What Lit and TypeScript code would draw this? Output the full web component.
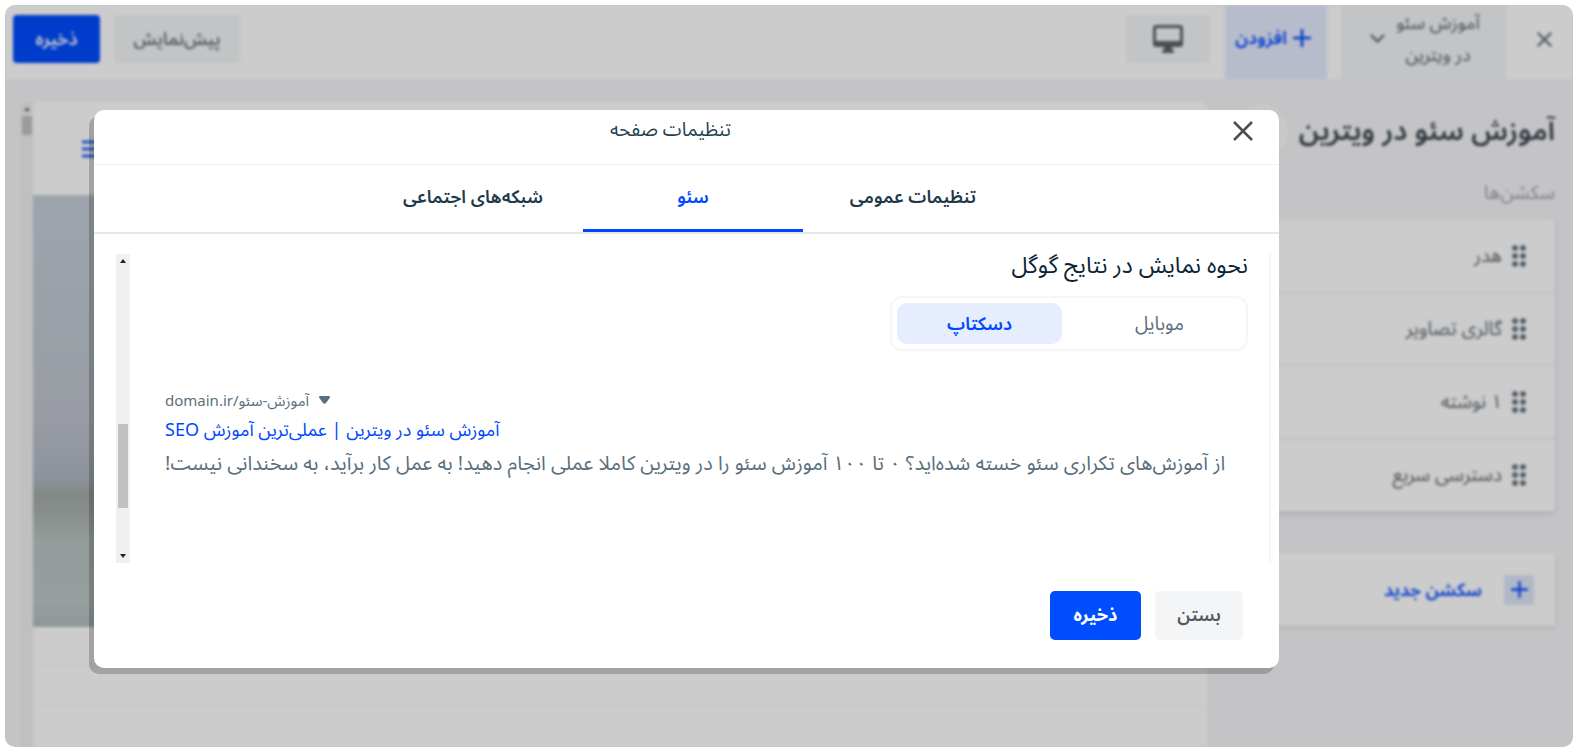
import { LitElement, html, css, svg } from "lit";
import { customElement, state } from "lit/decorators.js";
import { classMap } from "lit/directives/class-map.js";

const plus = (size: number, width: number) => html`
  <svg width=${size} height=${size} viewBox="0 0 18 18" aria-hidden="true">
    <path d="M9 1v16M1 9h16" fill="none" stroke="currentColor" stroke-width=${width} stroke-linecap="round" />
  </svg>`;

const cross = (size: number, width: number) => html`
  <svg width=${size} height=${size} viewBox="0 0 20 20" aria-hidden="true">
    <path d="M1 1l18 18M19 1L1 19" fill="none" stroke="currentColor" stroke-width=${width} />
  </svg>`;

const base = css`
  * { box-sizing: border-box; }
  button { font: inherit; color: inherit; border: 0; background: none; padding: 0; cursor: pointer; }
  a { text-decoration: none; color: inherit; }
  h1, h2, p, ul { margin: 0; padding: 0; font-weight: inherit; }
  svg { display: block; flex: none; }
`;

@customElement("page-editor")
class PageEditor extends LitElement {
  static styles = [base, css`
    :host { display: flex; flex-direction: column; height: 100%; background: #f5f6f8; filter: blur(1.4px); }
    .bar { display: flex; height: 74px; background: #fff; align-items: center; padding: 0 16px 0 8px; flex: none; font-size: 18px; color: #5a6269; }
    .exit, .device, .preview, .save { margin-bottom: 6px; }
    .exit { width: 26px; height: 40px; display: grid; place-items: center; }
    .page-pick, .add { height: 74px; padding-bottom: 8px; display: flex; align-items: center; justify-content: center; }
    .page-pick { margin-right: 25px; width: 165px; background: #f4f5f7; gap: 8px; line-height: 32px; padding-left: 6px; }
    .page-pick span { width: 90px; }
    .add { margin-right: 14px; width: 102px; background: #e5ecff; color: #0048ff; font-weight: 600; gap: 6px; padding-right: 6px; }
    .device { margin-right: 15px; width: 84px; height: 48px; background: #f4f5f7; border-radius: 4px; display: grid; place-items: center; }
    .space { flex: 1; }
    .preview { width: 126px; height: 48px; background: #f4f5f7; border-radius: 4px; font-weight: 500; }
    .save { margin-right: 14px; width: 87px; height: 48px; background: #004cff; color: #fff; border-radius: 4px; font-weight: 600; }
    .work { flex: 1; display: flex; min-height: 0; }
    .side { width: 366px; padding: 24px 18px 0; display: flex; flex-direction: column; }
    .head { display: flex; align-items: center; gap: 10px; height: 56px; }
    .head h1 { font-size: 28px; font-weight: 600; color: #3b474f; white-space: nowrap; }
    .round { width: 56px; height: 56px; border-radius: 50%; background: #fbfbfc; box-shadow: 0 0 3px #d8dadd; flex: none; }
    .label { font-size: 19px; line-height: 32px; margin-top: 17px; color: #9b9fa4; }
    .sections { list-style: none; margin-top: 12px; background: #fff; box-shadow: 0 2px 5px #d5d7da; }
    .sections li { height: 73px; display: flex; align-items: center; gap: 10px; padding-right: 29px; border-bottom: 1px solid #e4e6e8; color: #5b666f; font-size: 19px; }
    .grip { color: #566874; }
    .new { margin-top: 41px; height: 73px; background: #fff; box-shadow: 0 2px 5px #dcdde0; display: flex; align-items: center; gap: 22px; padding-right: 21px; color: #0048ff; font-weight: 600; font-size: 18px; }
    .new span { width: 30px; height: 30px; border-radius: 3px; background: #dde6fb; display: grid; place-items: center; }
    .canvas { flex: 1; display: flex; padding: 23px 0 0 15px; }
    .site { flex: 1; background: #fff; border-radius: 4px 8px 0 0; }
    .site-head { height: 93px; display: flex; align-items: center; justify-content: flex-end; padding-left: 49px; color: #0048ff; }
    .photo { height: 432px; background: linear-gradient(#c6ced9 0, #c0c8d0 34%, #c0c4ce 50%, #b0b7c2 66%, #a3aaaa 69%, #aab2b0 74%, #b9c4c3 80%, #bdc7c6 94%, #b2bdc0 100%); }
    .row { height: 40px; border-bottom: 1px solid #f8f8f8; }
    .rail { width: 13px; background: #f0f0f0; color: #666; padding-top: 5px; display: flex; flex-direction: column; align-items: center; gap: 5px; }
    .rail i { width: 10px; height: 19px; background: #c1c1c1; }
  `];

  render() {
    const names = ["هدر", "گالری تصاویر", "۱ نوشته", "دسترسی سریع"];
    return html`
      <header class="bar">
        <button class="exit" aria-label="خروج">${cross(15, 2.6)}</button>
        <button class="page-pick">
          <span>آموزش سئو در ویترین</span>
          <svg width="15" height="9" viewBox="0 0 15 9"><path d="M1 1l6.500 6.500L14 1" fill="none" stroke="currentColor" stroke-width="2.200" /></svg>
        </button>
        <button class="add">${plus(18, 2.6)}<span>افزودن</span></button>
        <button class="device" aria-label="نمای دسکتاپ">
          <svg width="30" height="28" viewBox="0 0 30 28"><path fill="currentColor" fill-rule="evenodd" d="M3 0h24a3 3 0 0 1 3 3v16a3 3 0 0 1-3 3h-8v2l2 2v2H9v-2l2-2v-2H3a3 3 0 0 1-3-3V3a3 3 0 0 1 3-3zm0 3v13h24V3z" /></svg>
        </button>
        <div class="space"></div>
        <button class="preview">پیش‌نمایش</button>
        <button class="save">ذخیره</button>
      </header>
      <div class="work">
        <aside class="side">
          <div class="head"><h1>آموزش سئو در ویترین</h1><div class="round"></div></div>
          <p class="label">سکشن‌ها</p>
          <ul class="sections">
            ${names.map((n) => html`<li>
              <svg class="grip" width="14" height="22" viewBox="0 0 14 22">
                ${[3, 11, 19].map((y) => [3, 11].map((x) => svg`<circle cx=${x} cy=${y} r="2.800" fill="currentColor" />`))}
              </svg>${n}</li>`)}
          </ul>
          <button class="new"><span>${plus(17, 2.4)}</span>سکشن جدید</button>
        </aside>
        <main class="canvas">
          <div class="site">
            <div class="site-head">
              <svg width="22" height="18" viewBox="0 0 22 18"><path d="M0 2h22M0 9h22M0 16h22" stroke="currentColor" stroke-width="2.600" /></svg>
            </div>
            <div class="photo"></div>
            <div class="row"></div><div class="row"></div>
          </div>
          <div class="rail">
            <svg width="6" height="4" viewBox="0 0 6 4"><path d="M3 0l3 4H0z" fill="currentColor" /></svg><i></i>
          </div>
        </main>
      </div>`;
  }
}

@customElement("page-settings")
class PageSettings extends LitElement {
  static styles = [base, css`
    :host { display: flex; flex-direction: column; background: #fff; border-radius: 10px; box-shadow: -5px 6px 0 rgba(0, 0, 0, 0.2); overflow: hidden; }
    .title { display: flex; align-items: flex-start; height: 55px; border-bottom: 1px solid #f0f1f2; padding: 0 26px 0 0; }
    .close { width: 20px; height: 42px; display: grid; place-items: center; color: #4d4d4d; }
    .title h1 { flex: 1; text-align: center; font-size: 19px; line-height: 39px; color: #24414f; padding-left: 14px; }
    .tabs { display: flex; justify-content: center; height: 69px; padding-left: 13px; border-bottom: 2px solid #e6e7e8; }
    .tab { flex: 0 1 220px; height: 67px; border-bottom: 3px solid transparent; font-size: 18px; font-weight: 600; color: #1e3a49; }
    .tab.on { color: #0048ff; border-color: #0048ff; }
    .body { display: flex; margin: 20px 8px 0 22px; height: 309px; }
    .content { flex: 1; border-right: 2px solid #f4f5f6; padding-right: 21px; min-width: 0; }
    .content h2 { font-size: 23px; line-height: 20px; color: #0c2433; }
    .switch { display: grid; grid-template-columns: 1fr 165px; gap: 16px; width: 358px; height: 55px; margin-top: 22px; padding: 5px; border: 2px solid #f5f6f7; border-radius: 12px; font-size: 19px; line-height: 38px; color: #5a707e; }
    .switch button { border-radius: 10px; padding-bottom: 2px; }
    .switch .on { background: #e6edff; color: #0048ff; font-size: 18px; font-weight: 600; }
    .result { margin-top: 36px; padding-left: 35px; display: flex; flex-direction: column; align-items: flex-end; color: #5a707e; }
    .url { display: flex; align-items: center; gap: 10px; font-size: 15px; line-height: 26px; }
    .link { color: #0048ff; font-size: 18px; line-height: 33px; }
    .desc { font-size: 20px; line-height: 33px; white-space: nowrap; }
    .rail { width: 14px; background: #f0f0f0; color: #222; padding: 5px 0 5px; display: flex; flex-direction: column; align-items: center; }
    .rail i { width: 10px; height: 84px; background: #c1c1c1; margin: 161px 0 auto; flex: none; }
    .foot { display: flex; gap: 14px; padding: 28px 36px; }
    .foot button { height: 49px; border-radius: 5px; font-size: 18px; font-weight: 600; padding-bottom: 2px; }
    .foot .shut { width: 88px; background: #f4f5f7; color: #54595e; }
    .foot .save { width: 91px; background: #004cff; color: #fff; font-weight: 700; }
  `];

  @state() private tab = 1;
  @state() private view = 1;

  render() {
    return html`
      <div class="title">
        <button class="close" aria-label="بستن">${cross(20, 2.5)}</button>
        <h1>تنظیمات صفحه</h1>
      </div>
      <nav class="tabs">
        ${["تنظیمات عمومی", "سئو", "شبکه‌های اجتماعی"].map((t, i) => html`
          <button class=${classMap({ tab: true, on: this.tab === i })} @click=${() => (this.tab = i)}>${t}</button>`)}
      </nav>
      <div class="body">
        <div class="content">
          <h2>نحوه نمایش در نتایج گوگل</h2>
          <div class="switch">
            ${["موبایل", "دسکتاپ"].map((t, i) => html`
              <button class=${classMap({ on: this.view === i })} @click=${() => (this.view = i)}>${t}</button>`)}
          </div>
          <div class="result">
            <div class="url">
              <svg width="11" height="8" viewBox="0 0 11 8"><path d="M1 0h9q1 0 1 1.500L7 7q-1.500 1.500-3 0L0 1.500Q0 0 1 0z" fill="currentColor" /></svg>
              <span dir="ltr">domain.ir/آموزش-سئو</span>
            </div>
            <a class="link" href="#">آموزش سئو در ویترین | عملی‌ترین آموزش SEO</a>
            <p class="desc">از آموزش‌های تکراری سئو خسته شده‌اید؟ ۰ تا ۱۰۰ آموزش سئو را در ویترین کاملا عملی انجام دهید! به عمل کار برآید، به سخندانی نیست!</p>
          </div>
        </div>
        <div class="rail">
          <svg width="6" height="4" viewBox="0 0 6 4"><path d="M3 0l3 4H0z" fill="currentColor" /></svg>
          <i></i>
          <svg width="6" height="4" viewBox="0 0 6 4"><path d="M0 0h6L3 4z" fill="currentColor" /></svg>
        </div>
      </div>
      <div class="foot">
        <button class="shut">بستن</button>
        <button class="save">ذخیره</button>
      </div>`;
  }
}

@customElement("app-root")
class AppRoot extends LitElement {
  static styles = css`
    :host { display: block; direction: rtl; background: #fff; padding: 5px 6px 7px 5px; height: 100vh; box-sizing: border-box;
      font-family: "Noto Sans", "Noto Sans Arabic", "DejaVu Sans", sans-serif; }
    .frame { position: relative; height: 100%; border-radius: 10px; overflow: hidden; background: #f5f6f8; }
    .shade { position: absolute; inset: 0; background: rgba(0, 0, 0, 0.2); padding: 105px 294px 0 89px; }
  `;
  render() {
    return html`<div class="frame">
      <page-editor></page-editor>
      <div class="shade"><page-settings role="dialog" aria-label="تنظیمات صفحه"></page-settings></div>
    </div>`;
  }
}
